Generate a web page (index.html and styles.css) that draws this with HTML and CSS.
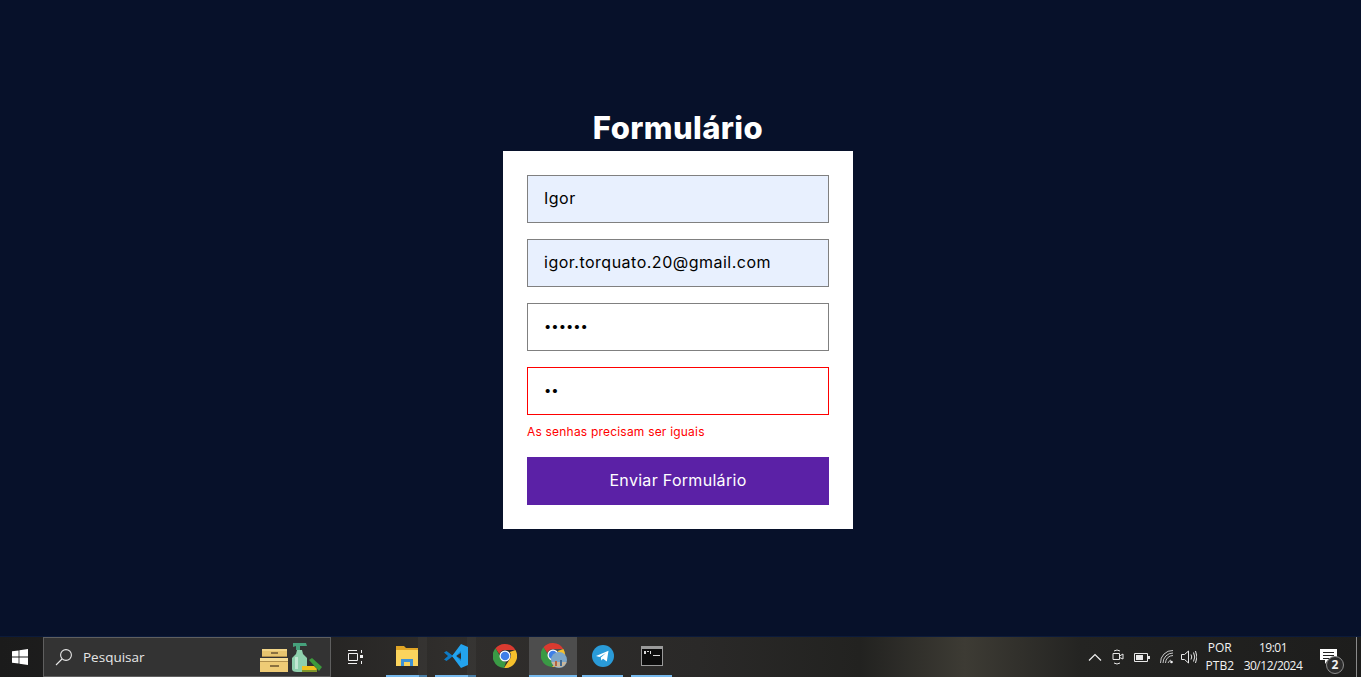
FILE: index.html
```html
<!DOCTYPE html>
<html lang="pt-BR">
  <head>
    <meta charset="UTF-8" />
    <meta name="viewport" content="width=device-width, initial-scale=1.0" />
    <title>Formulário</title>
    <link rel="stylesheet" href="styles.css">
  </head>

  <body>
    <main class="page">
      <h1 class="title">Formulário</h1>
      <form class="card">
        <input class="field autofilled" type="text" value="Igor" />
        <input class="field autofilled" type="email" value="igor.torquato.20@gmail.com" />
        <input class="field secret" type="password" value="123456" />
        <div class="group">
          <input class="field secret invalid" type="password" value="12" />
          <span class="error">As senhas precisam ser iguais</span>
        </div>
        <button class="send" type="button">Enviar Formulário</button>
      </form>
    </main>

    <footer class="taskbar">
      <div class="start">
        <svg width="16" height="16" viewBox="0 0 16 16"><path fill="#fff" d="M0 2.300 6.600 1.400V7.600H0ZM7.400 1.300 16 0V7.600H7.400ZM0 8.400H6.600V14.600L0 13.700ZM7.400 8.400H16V16L7.400 14.700Z"/></svg>
      </div>

      <div class="search">
        <svg width="18" height="18" viewBox="0 0 18 18" fill="none" stroke="#e8e8e8" stroke-width="1.100"><circle cx="11" cy="7" r="5.400"/><path d="M7 11 1 17"/></svg>
        <span class="search-text">Pesquisar</span>
        <svg class="search-art" width="64" height="32" viewBox="0 0 64 32">
          <path fill="#e6c46f" d="M3 8h25v8H3z"/>
          <path fill="#f2d588" d="M3 8h25v2H3z"/>
          <path fill="#eecb76" d="M1 17h28v14H1z"/>
          <path fill="#f5dc95" d="M1 17h28v3H1z"/>
          <path fill="#b08f4d" d="M1 20h28v1H1zM3 15h25v1H3z"/>
          <path fill="#8a7040" d="M12 11h7v2h-7zM11 24h9v2h-9z"/>
          <path fill="#46a17c" d="M34 2h13l1 3h-7v4h-4V5l-3 1z"/>
          <path fill="#8fd0ad" d="M38 9h5l1 4 4 4v11q0 3-3 3h-7q-5 0-5-3V17l4-4z"/>
          <path fill="#c2e6d2" d="M36 16h3v12h-3z"/>
          <path fill="#3d9a3c" d="M50 19l3-2 10 9-3 4z"/>
          <path fill="#f0c21f" d="M43 25h12l3 3-1 2H43z"/>
          <path fill="#7f962a" d="M43 29h15v2H43z"/>
        </svg>
      </div>

      <div class="task-view">
        <svg width="16" height="14" viewBox="0 0 16 14" fill="none" stroke="#f2f2f2"><path d="M1 .5h9M1 13.500h9M1.500 3.500h9v7h-9zM14.500 0v3M14.500 11v3"/><path fill="#f2f2f2" stroke="none" d="M13 5h3v3h-3z"/></svg>
      </div>

      <div class="apps">
        <div class="app open stacked">
          <svg width="22" height="20" viewBox="0 0 22 20"><path fill="#e0a526" d="M0 0h8l2 2h12v5H0z"/><path fill="#fbd45d" d="M0 4h22v16H0z"/><path fill="#3f93d6" d="M5 13h12v7h-3v-4H8v4H5z"/></svg>
        </div>
        <div class="app open stacked">
          <svg width="26" height="26" viewBox="0 0 26 26"><path fill="#0e7ac4" d="M1 9.500 3.500 8l6 4.500L18 4v6l-5 3 5 3v6l-8.500-8.500-6 4.500L1 16.500 5 13z"/><path fill="#23a3ee" d="M18 1l7 3v18l-7 3-9-12zM18 8l-5 5 5 5z"/></svg>
        </div>
        <div class="app">
          <svg width="24" height="24" viewBox="0 0 24 24">
            <path fill="#d93b30" d="M12 0a12 12 0 0 1 10.400 6H12a6 6 0 0 0-5.700 4.100L2.500 4.300A12 12 0 0 1 12 0z"/>
            <path fill="#f5c02c" d="M22.400 6A12 12 0 0 1 11 24l5.200-8a6 6 0 0 0 .6-8z"/>
            <path fill="#3a9a45" d="M2.500 4.300 7 12a6 6 0 0 0 6 5.900L11 24A12 12 0 0 1 2.500 4.300z"/>
            <circle cx="12" cy="12" r="5.500" fill="#fff"/>
            <circle cx="12" cy="12" r="4.300" fill="#3f7fe8"/>
          </svg>
        </div>
        <div class="app open active">
          <svg class="profile-chrome" width="27" height="26" viewBox="0 0 27 26">
            <path fill="#d93b30" d="M12 0a12 12 0 0 1 10.400 6H12a6 6 0 0 0-5.700 4.100L2.500 4.300A12 12 0 0 1 12 0z"/>
            <path fill="#f5c02c" d="M22.400 6A12 12 0 0 1 11 24l5.200-8a6 6 0 0 0 .6-8z"/>
            <path fill="#3a9a45" d="M2.500 4.300 7 12a6 6 0 0 0 6 5.900L11 24A12 12 0 0 1 2.500 4.300z"/>
            <circle cx="12" cy="12" r="5.500" fill="#fff"/>
            <circle cx="12" cy="12" r="4.300" fill="#3f7fe8"/>
            <circle cx="18" cy="17" r="8" fill="#7da6c8"/>
            <path fill="#c9b79c" d="M10.500 19h15a8 8 0 0 1-15 0z"/>
            <path fill="#b4643f" d="M14 18h2v5h-2z"/>
            <path fill="#41688f" d="M19 17h2v6h-2z"/>
          </svg>
        </div>
        <div class="app open">
          <svg width="22" height="22" viewBox="0 0 22 22"><circle cx="11" cy="11" r="11" fill="#2a9bd8"/><path fill="#fff" d="M4 11 16.500 5.800 14.800 16.500 11 13.800 9.300 15.500 8.800 12.500 14 8 7.500 11.900z"/></svg>
        </div>
        <div class="app open">
          <svg width="22" height="20" viewBox="0 0 22 20"><path fill="#9a9a9a" d="M0 0h22v20H0z"/><path fill="#0c0c0c" d="M1 3h20v16H1z"/><path fill="#d8d8d8" d="M3 5h2v3H3zM6 5h2v1H6zM9 5h1v3H9zM12 9h7v1h-7z"/></svg>
        </div>
      </div>

      <div class="glow"></div>

      <div class="tray">
        <svg class="tray-icon" width="14" height="8" viewBox="0 0 14 8" fill="none" stroke="#f0f0f0" stroke-width="1.200"><path d="M1 7.500 7 1.500l6 6"/></svg>
        <svg class="tray-icon" width="12" height="16" viewBox="0 0 12 16" fill="none" stroke="#e8e8e8"><path d="M2 2q3-2 6 0M2 14q3 2 6 0M1 4.500h6.500v6H1zM7.500 7 11 5v5L7.500 8.500"/></svg>
        <svg class="tray-icon" width="16" height="9" viewBox="0 0 16 9" fill="none" stroke="#e8e8e8"><path d="M.500.500h13v8H.500z"/><path fill="#e8e8e8" stroke="none" d="M2 2h7v5H2zM14 3h2v3h-2z"/></svg>
        <svg class="tray-icon tight" width="14" height="14" viewBox="0 0 14 14" fill="none" stroke="#c8c8c8"><path d="M.500 13A12 12 0 0 1 13 .500M3 13a10 10 0 0 1 10-10M5.500 13A7.500 7.500 0 0 1 13 5.500M8 13a5 5 0 0 1 3-3"/><circle cx="11.500" cy="12" r="1.300" fill="#f0f0f0" stroke="none"/></svg>
        <svg class="tray-icon tight" width="16" height="14" viewBox="0 0 16 14" fill="none" stroke="#e8e8e8"><path d="M.500 4.500h3l4-3.500v12l-4-3.500h-3zM10 4.500q1.500 2.500 0 5M12.500 2.500q2.500 4.500 0 9M14.500 1q3 6 0 12" /></svg>
        <div class="lang"><span>POR</span><span>PTB2</span></div>
        <div class="clock"><span>19:01</span><span>30/12/2024</span></div>
        <div class="notify">
          <svg class="notify-icon" width="17" height="15" viewBox="0 0 17 15"><path fill="#fff" d="M0 0h17v11H8l-3 4v-4H0z"/><path stroke="#222" d="M3 3.500h11M3 6.500h11M3 9.500h7"/></svg>
          <span class="badge">2</span>
        </div>
        <div class="show-desktop"></div>
      </div>
    </footer>
  </body>
</html>
```

FILE: styles.css
```css
* {
  box-sizing: border-box;
}

body {
  margin: 0;
  height: 677px;
  display: flex;
  flex-direction: column;
  overflow: hidden;
  background-color: #07112a;
  font-family: Inter, "Liberation Sans", sans-serif;
}

.page {
  flex: 1;
  display: flex;
  flex-direction: column;
  align-items: center;
  justify-content: center;
  padding-right: 5px;
  border-bottom: 1px solid #0b1a3a;
}

.title {
  margin: 0;
  height: 43px;
  color: #fff;
  font-size: 31px;
  font-weight: 800;
  line-height: 40px;
  letter-spacing: 0.4px;
}

.card {
  width: 350px;
  padding: 24px;
  display: flex;
  flex-direction: column;
  gap: 16px;
  background-color: #fff;
}

.field {
  display: block;
  width: 100%;
  height: 48px;
  padding: 0 16px 2px;
  border: 1px solid #808080;
  border-radius: 0;
  outline: none;
  background-color: #fff;
  color: #000;
  font-family: Inter, "Liberation Sans", sans-serif;
  font-size: 16px;
  letter-spacing: 0.5px;
}

.secret {
  font-size: 13px;
  letter-spacing: 0;
}

.autofilled {
  background-color: #e8f0fe;
}

.invalid {
  border-color: #f00;
}

.group {
  display: flex;
  flex-direction: column;
  gap: 8px;
}

.error {
  color: #f00;
  font-size: 12px;
  line-height: 18px;
  height: 18px;
  letter-spacing: 0.2px;
}

.send {
  height: 48px;
  padding: 0 0 2px;
  border: 0;
  background-color: #5b21a6;
  color: #fff;
  font-family: Inter, "Liberation Sans", sans-serif;
  font-size: 16px;
  letter-spacing: 0.3px;
}

.taskbar {
  height: 40px;
  display: flex;
  align-items: stretch;
  color: #f2f2f2;
  font-family: "Open Sans", sans-serif;
  background: linear-gradient(90deg, #1b1b1b 0, #242322 300px, #302e2c 450px, #2a2928 700px, #222220 860px, #3d3b34 965px, #242422 1080px, #1d1d1c 1361px);
}

.start {
  width: 43px;
  display: flex;
  align-items: center;
  justify-content: center;
  padding-right: 4px;
}

.search {
  width: 288px;
  display: flex;
  align-items: center;
  padding: 0 7px 0 11px;
  border: 1px solid #5f5f5f;
  background-color: #333;
}

.search-text {
  flex: 1;
  margin-left: 10px;
  font-size: 13.5px;
  color: #e6e6e6;
}

.task-view {
  width: 51px;
  display: flex;
  align-items: center;
  justify-content: center;
  padding-right: 3px;
}

.apps {
  display: flex;
}

.app {
  width: 41px;
  margin: 0 4px;
  display: flex;
  align-items: center;
  justify-content: center;
  border-bottom: 2px solid transparent;
}

.app.open {
  border-bottom-color: #76b9ed;
}

.app.stacked {
  border-image: linear-gradient(90deg, #76b9ed 78%, #4a7ea6 78%) 1;
  background: linear-gradient(90deg, transparent 78%, rgba(255, 255, 255, 0.03) 78%);
}

.app.active {
  width: 48px;
  margin: 0 1px 0 0;
  background-color: #4d4d4d;
}

.profile-chrome {
  margin-left: 2px;
}

.glow {
  flex: 1;
}

.tray {
  display: flex;
  align-items: center;
}

.tray-icon {
  margin-right: 10px;
}

.tray-icon.tight {
  margin-right: 7px;
}

.lang,
.clock {
  display: flex;
  flex-direction: column;
  align-items: center;
  font-size: 12px;
  line-height: 18px;
}

.lang {
  margin: 0 9px 0 2px;
}

.clock {
  width: 60px;
  letter-spacing: -0.5px;
}

.notify {
  position: relative;
  width: 36px;
  height: 100%;
  margin-left: 17px;
}

.notify-icon {
  display: block;
  margin-top: 12px;
}

.badge {
  position: absolute;
  left: 6px;
  top: 19px;
  width: 18px;
  height: 18px;
  border: 1px solid #8f8f8f;
  border-radius: 50%;
  background-color: #2c2c2c;
  color: #f2f2f2;
  font-size: 12px;
  font-weight: 700;
  line-height: 16px;
  text-align: center;
}

.show-desktop {
  width: 5px;
  height: 100%;
  border-left: 1px solid #8a8a8a;
}
```
